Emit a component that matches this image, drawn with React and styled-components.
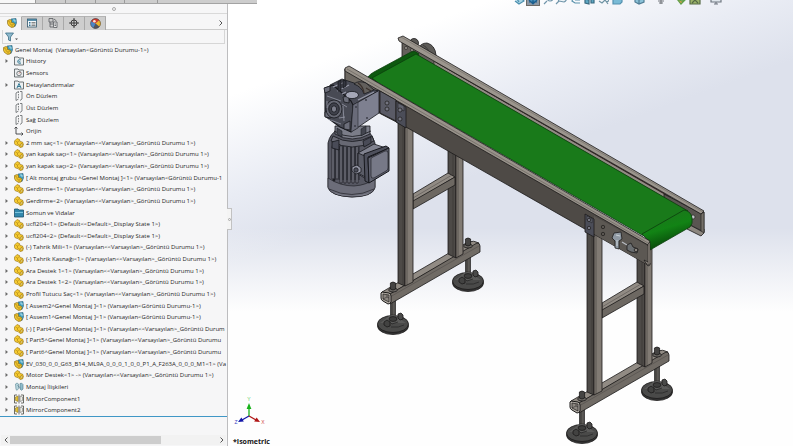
import React from 'react';
import styled, { createGlobalStyle } from 'styled-components';

const GlobalStyle = createGlobalStyle`
  * {
    box-sizing: border-box;
  }

  body {
    margin: 0;
    background: #ffffff;
    color: #1f1f1f;
    font-family: 'Open Sans', 'Noto Sans', sans-serif;
    font-size: 6px;
    overflow: hidden;
  }

  button {
    font: inherit;
    color: inherit;
    padding: 0;
    border: 0;
    background: none;
  }
`;

const Page = styled.div`
  position: relative;
  display: flex;
  height: 100vh;
`;

const CommandTabs = styled.div`
  position: absolute;
  z-index: 2;
  top: 0;
  left: 0;
  display: flex;
  width: 257px;
  height: 4px;
  background: #cdcdcd;
  border-bottom: 1px solid #a3a3a3;
`;

const CommandTab = styled.div`
  width: ${(p) => p.$width}px;
  background: ${(p) => (p.$active ? '#f7f7f7' : 'transparent')};
  border-right: 1px solid #9a9a9a;
`;

const Panel = styled.aside`
  display: flex;
  flex-direction: column;
  flex: 0 0 228px;
  min-width: 0;
  padding-top: 4px;
  background: #f6f6f7;
  border-right: 1px solid #bdbdbf;
`;

const Splitter = styled.div`
  display: flex;
  align-items: center;
  justify-content: center;
  height: 10px;
  border-bottom: 1px solid #d9d9d9;
`;

const SplitterDot = styled.span`
  width: 4px;
  height: 4px;
  border: 1px solid #aaaaaa;
  border-radius: 50%;
`;

const TabBar = styled.div`
  display: flex;
  align-items: center;
  height: 16px;
  padding-top: 2px;
  border-bottom: 1px solid #cccccc;
`;

const PanelTab = styled.button`
  display: flex;
  align-items: center;
  justify-content: center;
  width: ${(p) => (p.$active ? 22 : 21)}px;
  height: 14px;
  padding-left: ${(p) => (p.$active ? 2 : 0)}px;
  background: ${(p) => (p.$active ? '#f6f6f7' : '#cecece')};
  border-right: 1px solid #a9a9a9;
  border-top: 1px solid ${(p) => (p.$active ? '#e2e2e2' : '#b4b4b4')};
`;

const MoreButton = styled.button`
  display: flex;
  margin: 0 4px 0 auto;
`;

const FilterBar = styled.div`
  display: flex;
  align-items: center;
  height: 14px;
  margin: 0 2px;
  padding-left: 2px;
  border: 1px solid #d6d6d6;
  border-top: 0;
`;

const FilterButton = styled.button`
  display: flex;
`;

const Tree = styled.ul`
  display: grid;
  grid-auto-rows: 1fr;
  flex: 1;
  min-height: 0;
  margin: 0;
  padding: 0;
  list-style: none;
  border-bottom: 1px solid #3f97c6;
`;

const TreeRow = styled.li`
  display: flex;
  align-items: center;
  min-width: 0;
  padding-left: ${(p) => (p.$root ? 3 : 5)}px;
  line-height: 10px;
  white-space: pre;
`;

const ToggleSlot = styled.span`
  display: flex;
  flex: 0 0 9px;
`;

const Toggle = styled.button`
  display: flex;
`;

const RowIcon = styled.span`
  display: flex;
  flex: 0 0 10px;
  margin-right: 2px;
`;

const RowLabel = styled.span`
  flex: 1;
`;

const ScrollBar = styled.div`
  display: flex;
  align-items: center;
  height: 10px;
  margin: 18px 1px 1px;
  background: #f2f2f2;
`;

const ScrollArrow = styled.button`
  display: flex;
  justify-content: center;
  width: 9px;
`;

const ScrollTrack = styled.div`
  flex: 1;
  height: 8px;
`;

const ScrollThumb = styled.div`
  width: 73%;
  height: 100%;
  background: #cdcdcd;
`;

const Viewport = styled.main`
  position: relative;
  flex: 1;
  min-width: 0;
  background:
    linear-gradient(180deg, rgba(254, 254, 254, 0) 51%, #fefefe 70%),
    linear-gradient(160deg, #ffffff 90px, #e9ecf4 185px, #dde1ec 250px);
`;

const Scene = styled.svg`
  display: block;
  width: 100%;
  height: 100%;
`;

const PanelHandle = styled.button`
  position: absolute;
  top: 208px;
  left: -1px;
  display: flex;
  align-items: center;
  justify-content: center;
  width: 5px;
  height: 22px;
  background: #f4f4f4;
  border: 1px solid #c2c2c2;
  border-left: 0;
`;

const HandleDot = styled.span`
  width: 3px;
  height: 3px;
  border: 1px solid #a8a8a8;
  border-radius: 50%;
`;

const ViewToolbar = styled.div`
  position: absolute;
  top: -8px;
  left: 284px;
  display: flex;
  height: 14px;
`;

const ToolButton = styled.button`
  display: flex;
  align-items: center;
  justify-content: center;
  width: 14px;
  height: 14px;
  margin-right: ${(p) => p.$gap || 0}px;
  background: ${(p) => (p.$active ? '#8e99a5' : 'transparent')};
  border: 1px solid ${(p) => (p.$active ? '#6d6a66' : 'transparent')};
`;

const ViewName = styled.span`
  position: absolute;
  left: 5px;
  bottom: 0;
  color: #151515;
  font-size: 7px;
  font-weight: 700;
  line-height: 8px;
`;

const PartIcon = () => (
  <svg width="10" height="10" viewBox="0 0 20 20">
    <path d="M1 6 L6 1 L11 3 L12 7 L17 8 L19 13 L17 18 L12 19 L8 15 L3 14 L1 11 Z" fill="#f6cb30" stroke="#8a6408" strokeWidth="1.1" />
    <path d="M3 6 L7 8 L7 12 L11 14 L12 18 M7 8 L11 5 M11 14 L17 10" fill="none" stroke="#a57c10" strokeWidth="1" />
    <circle cx="15" cy="14" r="2" fill="#fff2a6" stroke="#8a6408" />
  </svg>
);

const AssemblyIcon = ({ size = 10 }) => (
  <svg width={size} height={size} viewBox="0 0 20 20">
    <path d="M8 2 L18 1 L19 10 L16 17 L10 14 Z" fill="#3f9fc0" stroke="#2f5e75" strokeWidth="1.2" />
    <path d="M1 5 L6 3 L9 5 L9 9 L14 10 L16 13 L14 18 L9 19 L3 15 L1 11 Z" fill="#f0c62f" stroke="#80600b" strokeWidth="1.2" />
    <path d="M2 6 L6 8 L6 12 L10 14 L14 12 M10 14 L10 18" fill="none" stroke="#9c7510" strokeWidth="1" />
    <path d="M12 4 L16 4 L16 8" fill="none" stroke="#d8f0f5" strokeWidth="1.4" />
  </svg>
);

const FolderIcon = ({ kind }) => (
  <svg width="10" height="10" viewBox="0 0 20 20">
    <path d="M1 18 V2 H8 L10 4 H19 V18 Z" fill={kind === 'solid' ? '#3389ad' : '#eceff1'} stroke={kind === 'solid' ? '#1c516b' : '#4f5558'} strokeWidth="1.6" />
    {kind === 'solid' && <path d="M2 9 H18" stroke="#7cc3dc" strokeWidth="2" />}
    {kind === 'history' && <path d="M14 8 A4 4 0 1 0 14 14 M10 9 V12 H13" fill="none" stroke="#2e7590" strokeWidth="1.7" />}
    {kind === 'sensor' && (
      <g fill="none" stroke="#54595c" strokeWidth="1.5">
        <circle cx="10" cy="11" r="4.5" />
        <path d="M10 11 L13 8" stroke="#b24a3a" />
      </g>
    )}
    {kind === 'notes' && <path d="M6 16 L10 7 L14 16 M7 13 H13" fill="none" stroke="#256f8c" strokeWidth="1.8" />}
  </svg>
);

const PlaneIcon = () => (
  <svg width="10" height="10" viewBox="0 0 20 20" fill="none" stroke="#5a5d60" strokeWidth="1.5">
    <path d="M9 1 L4 4 V19 L9 16" />
    <path d="M9 1 V16" strokeDasharray="3 2" />
    <path d="M12 1 H16 V16 L12 19" />
  </svg>
);

const OriginIcon = () => (
  <svg width="10" height="10" viewBox="0 0 20 20" fill="none" stroke="#3c3f42" strokeWidth="1.8">
    <path d="M4 2 V16 H18 M1 5 L4 2 L7 5 M15 13 L18 16 L15 19" />
  </svg>
);

const MatesIcon = () => (
  <svg width="10" height="10" viewBox="0 0 20 20">
    <path d="M3 4 Q6 0 9 4 V13 Q6 19 4 15 Z" fill="#b8d5dd" stroke="#638c9b" strokeWidth="1.3" />
    <path d="M12 3 Q16 1 18 5 V14 Q15 19 12 14 Z" fill="#8fbccb" stroke="#557f90" strokeWidth="1.3" />
    <path d="M7 7 L13 12" stroke="#557f90" strokeWidth="1.5" />
  </svg>
);

const MirrorIcon = () => (
  <svg width="10" height="10" viewBox="0 0 20 20">
    <path d="M6 2 H1 V18 H6 M14 2 H19 V18 H14" fill="none" stroke="#4a4a40" strokeWidth="1.6" />
    <path d="M3 6 L8 4 V15 L3 13 Z" fill="#e5c334" stroke="#80680f" />
    <path d="M17 6 L12 4 V15 L17 13 Z" fill="#f0efe8" stroke="#5c5c58" />
    <path d="M10 1 V19" stroke="#2b2b2b" strokeWidth="1.3" />
  </svg>
);

const icons = {
  assembly: <AssemblyIcon />,
  part: <PartIcon />,
  history: <FolderIcon kind="history" />,
  sensor: <FolderIcon kind="sensor" />,
  notes: <FolderIcon kind="notes" />,
  folder: <FolderIcon kind="solid" />,
  plane: <PlaneIcon />,
  origin: <OriginIcon />,
  mates: <MatesIcon />,
  mirror: <MirrorIcon />,
};

const treeItems = [
  ['history', 'History', true],
  ['sensor', 'Sensors', false],
  ['notes', 'Detaylandırmalar', true],
  ['plane', 'Ön Düzlem', false],
  ['plane', 'Üst Düzlem', false],
  ['plane', 'Sağ Düzlem', false],
  ['origin', 'Orijin', false],
  ['part', '2 mm saç<1> (Varsayılan<<Varsayılan>_Görüntü Durumu 1>)', true],
  ['part', 'yan kapak saçı<1> (Varsayılan<<Varsayılan>_Görüntü Durumu 1>)', true],
  ['part', 'yan kapak saçı<2> (Varsayılan<<Varsayılan>_Görüntü Durumu 1>)', true],
  ['assembly', '[ Alt montaj grubu ^Genel Montaj ]<1> (Varsayılan<Görüntü Durumu-1', true],
  ['part', 'Gerdirme<1> (Varsayılan<<Varsayılan>_Görüntü Durumu 1>)', true],
  ['part', 'Gerdirme<2> (Varsayılan<<Varsayılan>_Görüntü Durumu 1>)', true],
  ['folder', 'Somun ve Vidalar', true],
  ['part', 'ucfl204<1> (Default<<Default>_Display State 1>)', true],
  ['part', 'ucfl204<2> (Default<<Default>_Display State 1>)', true],
  ['part', '(-) Tahrik Mili<1> (Varsayılan<<Varsayılan>_Görüntü Durumu 1>)', true],
  ['part', '(-) Tahrik Kasnağı<1> (Varsayılan<<Varsayılan>_Görüntü Durumu 1>)', true],
  ['part', 'Ara Destek 1<1> (Varsayılan<<Varsayılan>_Görüntü Durumu 1>)', true],
  ['part', 'Ara Destek 1<2> (Varsayılan<<Varsayılan>_Görüntü Durumu 1>)', true],
  ['part', 'Profil Tutucu Saç<1> (Varsayılan<<Varsayılan>_Görüntü Durumu 1>)', true],
  ['assembly', '[ Assem2^Genel Montaj ]<1> (Varsayılan<Görüntü Durumu-1>)', true],
  ['assembly', '[ Assem1^Genel Montaj ]<1> (Varsayılan<Görüntü Durumu-1>)', true],
  ['part', '(-) [ Part4^Genel Montaj ]<1> (Varsayılan<<Varsayılan>_Görüntü Durum', true],
  ['part', '[ Part5^Genel Montaj ]<1> (Varsayılan<<Varsayılan>_Görüntü Durumu', true],
  ['part', '[ Part6^Genel Montaj ]<1> (Varsayılan<<Varsayılan>_Görüntü Durumu', true],
  ['assembly', 'EV_030_0_0_G63_B14_ML9A_0_0_0_1_0_0_P1_A_F263A_0_0_0_M1<1> (Va', true],
  ['part', 'Motor Destek<1> -> (Varsayılan<<Varsayılan>_Görüntü Durumu 1>)', true],
  ['mates', 'Montaj İlişkileri', true],
  ['mirror', 'MirrorComponent1', true],
  ['mirror', 'MirrorComponent2', true],
];

const Chevron = ({ flip }) => (
  <svg width="4" height="6" viewBox="0 0 4 6" fill="none" stroke="#555555">
    <path d={flip ? 'M3.5 0.5 L1 3 L3.5 5.5' : 'M0.5 0.5 L3 3 L0.5 5.5'} />
  </svg>
);

const FeatureTree = () => (
  <Tree>
    <TreeRow $root>
      <RowIcon>{icons.assembly}</RowIcon>
      <RowLabel>{'Genel Montaj  (Varsayılan<Görüntü Durumu-1>)'}</RowLabel>
    </TreeRow>
    {treeItems.map(([icon, label, expandable]) => (
      <TreeRow key={label}>
        <ToggleSlot>
          {expandable && (
            <Toggle aria-label={`Expand ${label}`}>
              <svg width="4" height="6" viewBox="0 0 4 6">
                <path d="M0.5 1 L3 3 L0.5 5 Z" fill="#6a6a6a" />
              </svg>
            </Toggle>
          )}
        </ToggleSlot>
        <RowIcon>{icons[icon]}</RowIcon>
        <RowLabel>{label}</RowLabel>
      </TreeRow>
    ))}
  </Tree>
);

const PanelTabs = () => (
  <TabBar>
    <PanelTab $active aria-label="Feature tree">
      <AssemblyIcon />
    </PanelTab>
    <PanelTab aria-label="Properties">
      <svg width="10" height="10" viewBox="0 0 20 20">
        <rect x="1" y="2" width="18" height="16" fill="#f4f8fa" stroke="#33566a" strokeWidth="1.6" />
        <path d="M1 4 H19" stroke="#2d6f92" strokeWidth="3" />
        <path d="M4 9 H7 M4 12 H7 M4 15 H7" stroke="#2d6f92" strokeWidth="2" />
        <path d="M9 9 H17 M9 12 H17 M9 15 H17" stroke="#4b4b4b" strokeWidth="1.3" />
      </svg>
    </PanelTab>
    <PanelTab aria-label="Configurations">
      <svg width="10" height="10" viewBox="0 0 20 20" fill="none" stroke="#505458" strokeWidth="1.5">
        <path d="M2 1 H10 V8 H2 Z M4 8 V18 H10 M4 12 H10" />
        <path d="M11 8 H18 V19 H11 Z M12 2 L17 6 M13 12 H16 M13 15 H16" fill="#e6e6e6" />
      </svg>
    </PanelTab>
    <PanelTab aria-label="Dimensions">
      <svg width="10" height="10" viewBox="0 0 20 20" fill="none" stroke="#2d2d2d" strokeWidth="1.8">
        <circle cx="10" cy="10" r="6" />
        <path d="M10 0 V20 M0 10 H20" />
      </svg>
    </PanelTab>
    <PanelTab aria-label="Appearances">
      <svg width="11" height="11" viewBox="0 0 20 20">
        <circle cx="10" cy="10" r="9" fill="#4a86c8" />
        <path d="M10 10 L2 6 A9 9 0 0 1 17 4 Z" fill="#d23a2c" />
        <path d="M10 10 L17 4 A9 9 0 0 1 17 16 Z" fill="#f0b52a" />
        <path d="M10 10 L17 16 A9 9 0 0 1 6 18 Z" fill="#52555c" />
        <circle cx="8" cy="6" r="2.4" fill="#ffe3d6" />
        <circle cx="10" cy="10" r="9" fill="none" stroke="#4b3b34" />
      </svg>
    </PanelTab>
    <MoreButton aria-label="More tabs">
      <Chevron />
    </MoreButton>
  </TabBar>
);

const edge = { stroke: '#1c1b1a', strokeWidth: 0.8, strokeLinejoin: 'round' };

const Foot = ({ x, y }) => (
  <g transform={`translate(${x} ${y})`} {...edge}>
    <path d="M-2.4 -24 H2.4 V-4 H-2.4 Z" fill="#5b5956" />
    <path d="M-2.4 -9 H2.4 M-1 -24 V-6" strokeWidth="0.5" />
    <ellipse cx="0" cy="2" rx="15.5" ry="8.5" fill="#343434" />
    <ellipse cx="0" cy="0" rx="15.5" ry="8.5" fill="#4a4a49" />
    <path d="M-13 -1 Q-7 -5 -4 -8 Q0 -10 4 -8 Q8 -4 13 -1" fill="#5a5a59" stroke="none" />
    <ellipse cx="0" cy="-5" rx="4" ry="2.4" fill="#3d3d3c" />
    <path d="M5 -10 L8 -11 L10 -9 V-5 L7 -4 L5 -6 Z" fill="#4a4a49" />
    <path d="M-9 -2 L-6 -4 L-3 -2 V2 L-6 3 L-9 1 Z" fill="#424241" />
    <path d="M-2 3 Q6 4 11 1 M-4 -3 L-1 0 L5 -2" fill="none" stroke="#2a2a2a" />
  </g>
);

const StandBolt = ({ x, y }) => (
  <g transform={`translate(${x} ${y})`} {...edge}>
    <ellipse cx="0" cy="4" rx="4.4" ry="2" fill="#6a6763" />
    <path d="M-2.6 -3 Q0 -5 2.6 -3 V3 Q0 5 -2.6 3 Z" fill="#454443" />
  </g>
);

const Stand = ({ x = 0, y = 0 }) => (
  <g transform={`translate(${x} ${y})`} {...edge}>
    <Foot x={468} y={281} />
    <Foot x={393} y={324} />

    <path d="M382 292 L468 242 Q474 240 479 243 L390 294 Z" fill="#918b84" />
    <path d="M390 294 L477 243 Q480 243 480 246 V252 L390 304 Z" fill="#706b65" />
    <path d="M390 297 L479 246" fill="none" stroke="#4a4744" strokeWidth="0.5" />
    <path d="M382 292 L389 293 Q391 294 391 296 V302 Q390 304 388 304 L383 301 Q381 300 381 298 V293 Z" fill="#b5b0a9" strokeWidth="1" />
    <path d="M383 294 L389 295 V302 L383 299 Z" fill="#8d8882" strokeWidth="0.7" />
    <path d="M383 299 L387 297 L389 298 M387 297 V295" fill="none" strokeWidth="0.5" />

    <path d="M448 140 H456 V258 L448 254 Z" fill="#4d4a47" />
    <path d="M456 140 H463 V254 L456 258 Z" fill="#817b74" />
    <path d="M453 140 V256 M458 140 V257" stroke="#33312f" strokeWidth="0.5" />

    <path d="M413 194 L448 173 L455 177 L413 202 Z" fill="#918b84" />
    <path d="M413 201 L455 177 V185 L413 209 Z" fill="#6d6862" />
    <path d="M413 198 L452 175" stroke="#4a4744" strokeWidth="0.5" />

    <path d="M398 120 H405 V286 L398 283 Z" fill="#4d4a47" />
    <path d="M405 120 H413 V282 L405 286 Z" fill="#817b74" />
    <path d="M403 120 V285 M407 120 V285" stroke="#33312f" strokeWidth="0.5" />

    <StandBolt x={393} y={286} />
    <StandBolt x={468} y={242} />
  </g>
);

const BackRail = () => (
  <g {...edge}>
    <ellipse cx="414" cy="43" rx="4.5" ry="4.5" fill="#5a5855" />
    <path d="M419 49 Q420 43 427 43 Q435 45 436 55 L434 61 Z" fill="#5d5b58" />
    <path d="M423 45 Q430 49 430 57" fill="none" strokeWidth="0.5" />
    <path d="M402 41 L441 63 L441 70 L416 54 L402 61 Z" fill="#64605b" />
    <circle cx="406" cy="48" r="1.6" fill="#8a8580" strokeWidth="0.5" />
    <circle cx="412" cy="50" r="1.6" fill="#8a8580" strokeWidth="0.5" />
    <path d="M434 61 L700 214 L692 218 L434 67 Z" fill="#918b84" strokeWidth="0.6" />
    <path d="M436 62 L670 197" stroke="#3b2828" strokeWidth="1.2" />
    <path d="M436 66 L670 201" stroke="#4e4a46" strokeWidth="0.7" />
    <path d="M664 194 L700 213 L704 212 V232 L688 224 L684 211 L664 199 Z" fill="#595551" />
    <path d="M687 226 L690 225 L701 231 L704 229 V233 L701 236 L687 229 Z" fill="#8d8780" />
    <path d="M701 214 L704 212 V233 L701 231 Z" fill="#746f69" strokeWidth="0.6" />
    <circle cx="693" cy="217" r="2" fill="#c4c6cb" strokeWidth="0.6" />
    <path d="M398 38 L403 36 L704 211 L701 214 L399 41 Z" fill="#9c968e" />
    <path d="M401 37 L703 212" stroke="#66625d" strokeWidth="0.5" />
  </g>
);

const Belt = () => (
  <g stroke="#0b3d0d" strokeWidth="0.8" strokeLinejoin="round">
    <path d="M368 77 Q370 74 374 72 L411 52 Q415 50 419 54 L377 82 Z" fill="#0d590f" />
    <path d="M372 78 L416 54 L688 211 L648 237 L642 235 L377 82 Z" fill="#197a1a" />
    <path d="M642 234 L684 210 Q691 211 692 218 Q693 224 690 227 L650 250 L648 240 Z" fill="url(#roller)" />
  </g>
);

const FrontRail = () => (
  <g {...edge}>
    <path d="M345 69 L348 70 L648 244 V265 L406 127 L381 114 L345 94 Z" fill="#4e4a46" />
    <path d="M594 216 L648 246 V265 L594 234 Z" fill="#5c5853" stroke="none" />
    <path d="M345 69 L380 90 V112 L345 93 Z" fill="#6d6862" />
    <path d="M345 68 L349 66 L650 241 L648 245 L345 71 Z" fill="#98928a" />
    <path d="M347 69 L648 243" stroke="#615d58" strokeWidth="0.6" />
    <path d="M644 260 L650 263 V265 L648 266 Z" fill="#9a948c" />
    <path d="M648 244 L650 242 V264 L648 265 Z" fill="#8d877f" strokeWidth="0.5" />

    <path d="M380 91 L396 100 V121 L380 113 Z" fill="#5a5b66" />
    <path d="M396 101 L406 107 V128 L396 122 Z" fill="#4b4d58" />
    <path d="M398 103 L404 106 V111 L398 108 Z" fill="#60626e" strokeWidth="0.5" />
    <path d="M585 214 L594 219 V237 L585 232 Z" fill="#4b4d58" />
    <path d="M587 216 L592 219 V223 L587 220 Z" fill="#666977" strokeWidth="0.5" />
    <g fill="#737480" strokeWidth="0.7">
      <circle cx="387" cy="103" r="2" />
      <circle cx="387" cy="109" r="2" />
      <circle cx="400" cy="110" r="2" />
      <circle cx="400" cy="119" r="2" />
      <circle cx="589" cy="220" r="1.7" />
      <circle cx="589" cy="228" r="1.7" />
      <circle cx="603" cy="227" r="1.7" fill="#5a5651" />
      <circle cx="603" cy="234" r="1.7" fill="#5a5651" />
    </g>

    <path d="M622 242 L632 248" stroke="#b8bcc2" strokeWidth="1.2" />
    <path d="M614 233 L621 232 L622 239 L619 241 V249 L615 248 V241 L612 238 Z" fill="#8f99a3" />
    <path d="M616 235 L620 236 M617 240 V246" stroke="#dbe1e6" />
    <path d="M627 245 L631 243 L633 247 L638 249 L637 253 L631 252 L627 250 Z" fill="#6b6f72" />
    <circle cx="636" cy="250" r="1.8" fill="#8d8780" />
  </g>
);

const finXs = [332, 336, 340, 344, 348, 352, 356];

const Motor = () => (
  <g {...edge} stroke="#17181d">
    <path d="M328 143 Q330 133 339 129 H366 Q373 135 375 143 V187 Q374 196 352 197 Q330 196 328 187 Z" fill="#565762" />
    <path d="M328 178 Q340 186 354 186 Q368 185 375 178 V188 Q372 197 352 197 Q331 196 328 188 Z" fill="#6c6d79" strokeWidth="0.6" />
    <path d="M329 189 Q352 200 374 189" fill="none" strokeWidth="0.6" />
    <path d="M334 193 Q352 199 370 193 Q364 196 352 196 Q340 196 334 193 Z" fill="#9799a6" stroke="none" />
    {finXs.map((x) => (
      <g key={x}>
        <path d={`M${x} 147 Q${x + 1} 142 ${x + 2} 147 V${x < 340 ? 179 : 183} H${x} Z`} fill="#81838f" strokeWidth="0.7" />
        <path d={`M${x + 3} 146 V180`} stroke="#25262e" strokeWidth="1" />
      </g>
    ))}
    <path d="M333 136 Q352 147 372 136 L374 141 Q352 153 331 141 Z" fill="#686974" />
    <path d="M335 126 V134 Q352 144 370 134 V126 Z" fill="#7b7d89" />
    <path d="M334 131 Q352 142 371 131" fill="none" />
    <path d="M337 128 L342 131 V137 L337 134 Z M361 129 L366 126 V133 L361 136 Z" fill="#43454f" strokeWidth="0.5" />
    <path d="M332 142 L339 140 V150 L332 148 Z M363 141 L371 137 V143 L364 147 Z" fill="#494b57" />
    <circle cx="334" cy="180" r="1" fill="#25262e" />

    <path d="M353 104 L379 90 V113 L351 132 Z" fill="#7e8090" />
    <path d="M330 85 L342 79 L378 91 L353 105 L333 97 Z" fill="#4a4c57" />
    <path d="M325 88 L333 85 L351 101 L353 105 L351 132 L340 127 L325 116 Z" fill="#484a54" strokeWidth="1.1" />
    <path d="M353 105 L358 102 V128 L351 132 Z" fill="#696b79" strokeWidth="0.5" />
    <path d="M324 88 L330 86 V91 L325 93 Z M325 112 L331 110 V118 L325 117 Z M344 124 L350 121 V130 L344 129 Z M343 97 L349 96 V103 L344 102 Z" fill="#6c6e7a" />
    <ellipse cx="334" cy="109" rx="8" ry="9" fill="#666873" />
    <ellipse cx="334" cy="109" rx="5.3" ry="6.2" fill="#3f414b" />
    <ellipse cx="334" cy="109" rx="2.6" ry="3.2" fill="#7c7e8b" />
    <path d="M327 96 L341 101 M343 106 L344 121 M328 119 L341 124 M327 101 V108 M342 104 L347 107 M339 118 L345 117" fill="none" stroke="#a1a3b1" strokeWidth="0.7" />
    <ellipse cx="352" cy="95" rx="6.5" ry="3.6" fill="#a5a7b7" />
    <path d="M333 87 L345 82 M337 91 L349 85 M342 94 L346 92 M358 100 L374 92" stroke="#9698a7" strokeWidth="1.3" />
    <path d="M338 82 L341 80 V90 L338 91 Z M343 80 L346 81 V86 L343 88 Z" fill="#343640" />
    <path d="M354 84 Q358 80 366 83 L374 90 L364 94 Q362 87 354 84 Z" fill="#625f5c" />
    <path d="M358 83 Q363 86 364 93 M366 88 L371 91" fill="none" stroke="#3a302c" strokeWidth="1.2" />
    <g fill="#3c3e48" stroke="none">
      <circle cx="356" cy="107" r="1" />
      <circle cx="366" cy="100" r="1" />
      <circle cx="367" cy="118" r="1" />
      <circle cx="355" cy="126" r="1" />
    </g>

    <path d="M358 153 L374 144 L386 148 L368 157 V180 L358 174 Z" fill="#80828f" />
    <path d="M358 153 L367 157 V178 L358 173 Z" fill="#5a5c67" />
    <path d="M364 154 L386 146 L389 148 L368 157 L369 183 L365 181 Z" fill="#4e505c" strokeWidth="1" />
    <path d="M368 158 L389 148 V171 L369 183 Z" fill="#60626f" strokeWidth="1" />
    <path d="M371 160 Q370 158 373 157 L385 151 Q388 150 388 153 V168 Q388 170 386 171 L374 178 Q371 179 371 176 Z" fill="#777987" strokeWidth="0.6" />
    <path d="M352 167 L357 165 L361 168 V172 L356 174 L352 171 Z" fill="#9496a5" />
    <circle cx="356" cy="170" r="2.2" fill="#4c4e5a" />
  </g>
);

const Triad = () => (
  <g fontFamily="Liberation Sans, sans-serif" fontSize="5" textAnchor="middle" strokeWidth="1.3">
    <path d="M249 416 V408" stroke="#17b21a" />
    <path d="M249 403 L251.4 409 H246.6 Z" fill="#17b21a" />
    <path d="M249 416 L242 420" stroke="#1216a8" />
    <path d="M238 422 L241.4 417.6 L243.8 421.6 Z" fill="#1216a8" />
    <path d="M249 416 L256 420" stroke="#b01515" />
    <path d="M260 422 L256.6 417.6 L254.2 421.6 Z" fill="#b01515" />
    <text x="249" y="401" fill="#59cf5c">Y</text>
    <text x="236" y="424" fill="#3a3fc0">Z</text>
    <text x="263" y="424" fill="#d04848">X</text>
  </g>
);

const Model = () => (
  <Scene viewBox="228 0 565 446" role="img" aria-label="Genel Montaj">
    <defs>
      <linearGradient id="roller" x1="0.35" y1="0.2" x2="0.6" y2="0.85">
        <stop offset="0" stopColor="#197a1a" />
        <stop offset="0.4" stopColor="#128315" />
        <stop offset="1" stopColor="#084a0a" />
      </linearGradient>
    </defs>
    <Stand />
    <Stand x={189} y={109} />
    <BackRail />
    <Belt />
    <FrontRail />
    <Motor />
    <Triad />
  </Scene>
);

const lens = 'M3 11 L6 8 M6 5 A3 3 0 1 1 9 8 A3 3 0 0 1 6 5';

const tools = [
  { name: 'Orientation', d: 'M2 8 L6 11 L11 8 L8 5 M4 6 L6 9', color: '#4d91b0', fill: '#a9d4e4' },
  { name: 'Normal to', d: 'M6 1 V11 M2 7 L6 11 L10 7 M2 9 H10', color: '#1c5f8f', fill: '#4c94bf', active: true },
  { name: 'Zoom to fit', d: lens, color: '#7196ab', fill: 'none' },
  { name: 'Zoom to area', d: 'M1 11 L4 8 M4 8 A4 3 0 1 1 9 9 Z', color: '#7196ab', fill: '#edf4f7' },
  { name: 'Previous view', d: 'M5 4 L3 8 L6 10 H11 M6 7 H11', color: '#5c93ad', fill: 'none' },
  { name: 'Section view', d: 'M2 6 L6 7 V11 L2 10 Z M8 6 H11 V10 H8 Z', color: '#396a80', fill: '#5ea7c2' },
  { name: 'Dynamic views', d: 'M2 8 L5 10 L8 7 L11 11 M6 6 A3 3 0 1 1 9 9', color: '#6e93a3', fill: 'none' },
  { name: 'View orientation', d: 'M2 5 H9 L11 4 V9 L9 11 H2 Z', color: '#5592b0', fill: '#79bbd6', gap: 8 },
  { name: 'Display style', d: 'M2 5 L6 7 L11 5 V9 L6 11 L2 9 Z M6 7 V11', color: '#517e96', fill: '#8bc2d8', gap: 8 },
  { name: 'Hide items', d: 'M6 4 V11 M3 8 H9 M4 10 H8', color: '#777b80', fill: 'none', gap: 6 },
  { name: 'Edit appearance', d: 'M2 6 L6 11 L11 6 L7 8 Z', color: '#61a04a', fill: '#d6a04c' },
  { name: 'Apply scene', d: 'M1 5 H11 V11 H1 Z M3 10 L6 7 L9 10', color: '#566a45', fill: '#9bb36a', gap: 7 },
  { name: 'View settings', d: 'M1 4 V9 H11 V4 M4 11 H8 M6 9 V11', color: '#6f7780', fill: '#dfe6ec' },
];

const App = () => (
  <Page>
    <GlobalStyle />
    <CommandTabs>
      <CommandTab $width={36} $active />
      <CommandTab $width={30} />
      <CommandTab $width={30} />
      <CommandTab $width={29} />
      <CommandTab $width={33} />
    </CommandTabs>

    <Panel>
      <Splitter>
        <SplitterDot />
      </Splitter>
      <PanelTabs />
      <FilterBar>
        <FilterButton aria-label="Filter">
          <svg width="14" height="10" viewBox="0 0 28 20">
            <path d="M1 2 H17 L11 10 V18 L7 16 V10 Z" fill="#8db9cd" stroke="#3d6f88" strokeWidth="1.6" />
            <path d="M20 13 H26 L23 16 Z" fill="#444444" />
          </svg>
        </FilterButton>
      </FilterBar>
      <FeatureTree />
      <ScrollBar>
        <ScrollArrow aria-label="Scroll left">
          <Chevron flip />
        </ScrollArrow>
        <ScrollTrack>
          <ScrollThumb />
        </ScrollTrack>
        <ScrollArrow aria-label="Scroll right">
          <Chevron />
        </ScrollArrow>
      </ScrollBar>
    </Panel>

    <Viewport>
      <Model />
      <PanelHandle aria-label="Collapse panel">
        <HandleDot />
      </PanelHandle>
      <ViewToolbar>
        {tools.map((tool) => (
          <ToolButton key={tool.name} aria-label={tool.name} $active={tool.active} $gap={tool.gap}>
            <svg width="12" height="12" viewBox="0 0 12 12">
              <path d={tool.d} fill={tool.fill} stroke={tool.color} strokeWidth="1.2" />
            </svg>
          </ToolButton>
        ))}
      </ViewToolbar>
      <ViewName>*Isometric</ViewName>
    </Viewport>
  </Page>
);

export default App;
